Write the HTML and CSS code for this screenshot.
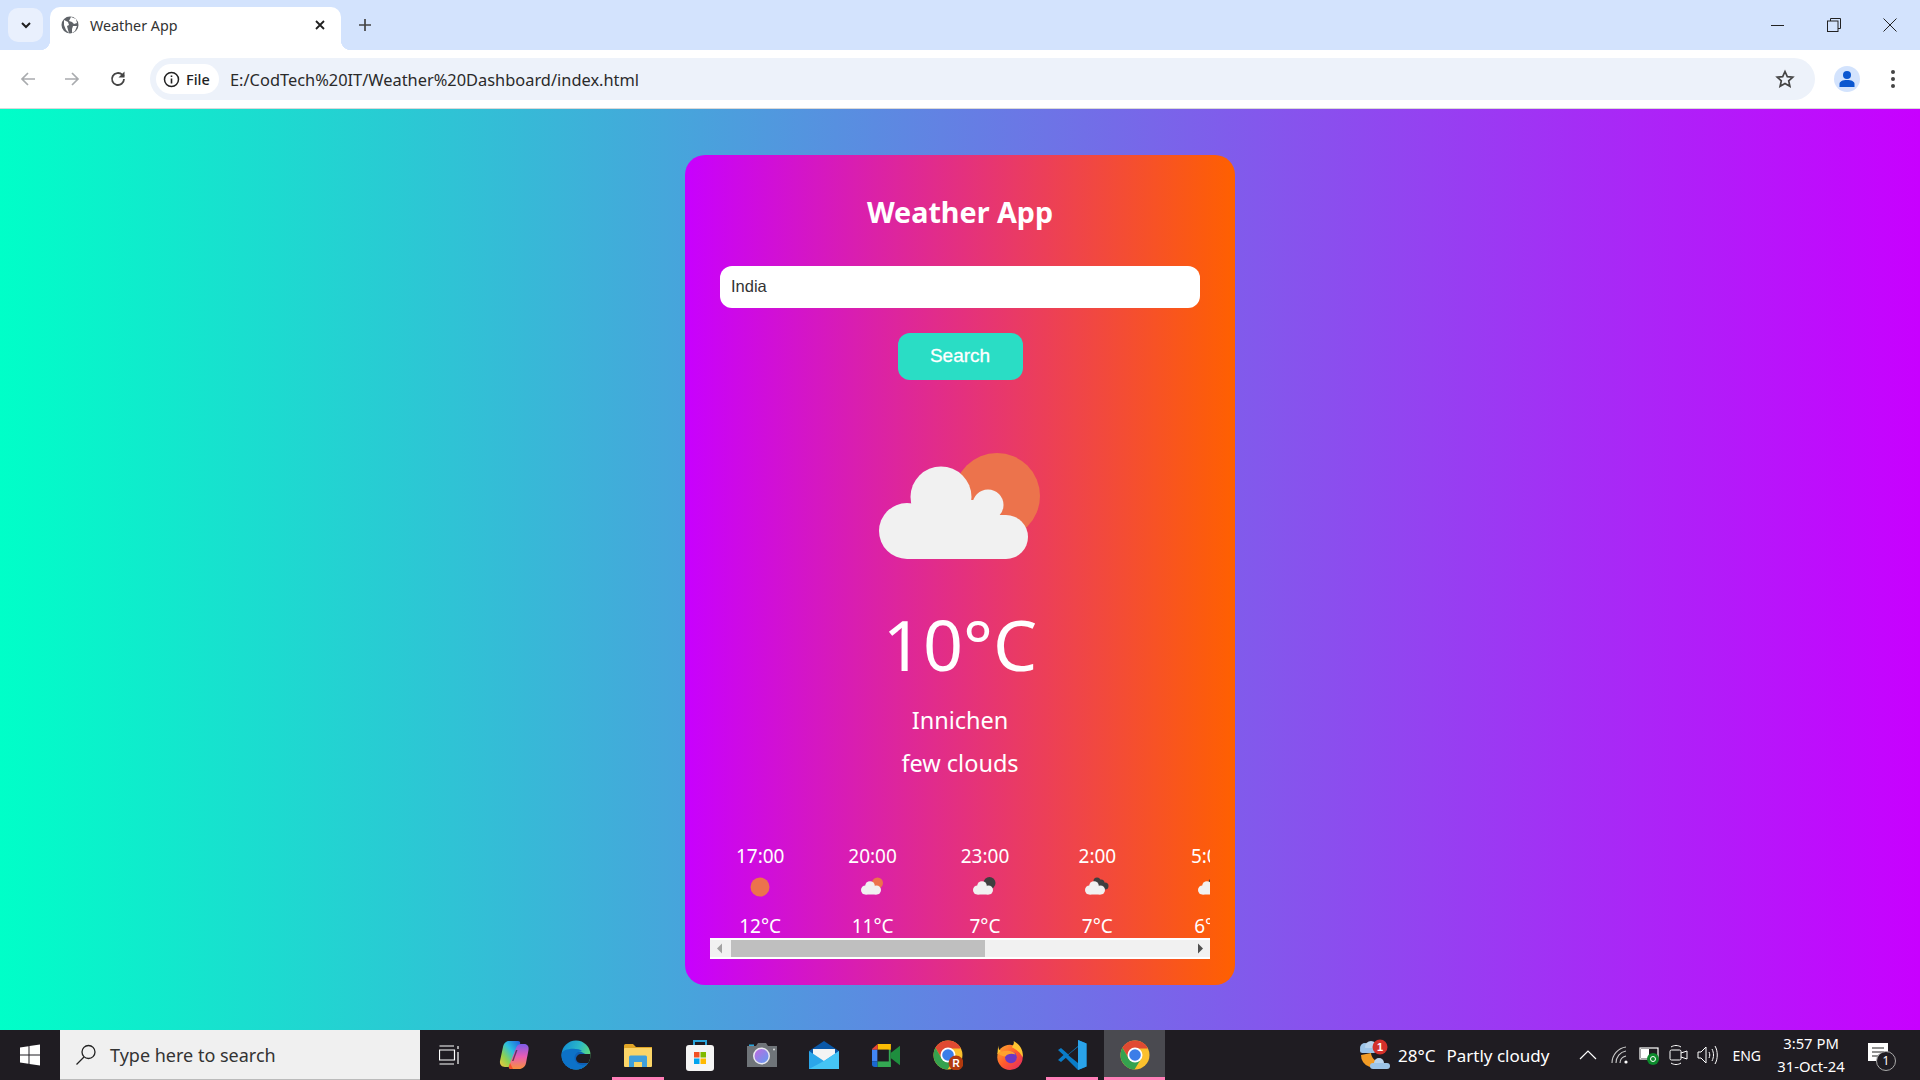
FILE: index.html
```html
<!DOCTYPE html>
<html lang="en">
<head>
    <meta charset="UTF-8">
    <title>Weather App</title>
    <link rel="stylesheet" href="styles.css">
</head>
<body>
    <div class="tabstrip">
        <div class="tab-list">
            <svg width="14" height="14" viewBox="0 0 14 14"><path d="M3 5l4 4 4-4" fill="none" stroke="#1f1f1f" stroke-width="2"/></svg>
        </div>
        <div class="tab">
            <svg class="favicon" width="18" height="18" viewBox="0 0 18 18"><circle cx="9" cy="9" r="8.5" fill="#5f6368"/><path d="M3 4l4 2 1 3-2 1 1 4 1 3-3-3-2-5zM10 1l5 2 1 4-3 1-2-2-3-1zM12 10l4 0-2 5-3 2 0-4z" fill="#fff"/></svg>
            <span class="tab-title">Weather App</span>
            <svg class="tab-close" width="12" height="12" viewBox="0 0 12 12"><path d="M2 2l8 8M10 2l-8 8" stroke="#1f1f1f" stroke-width="1.8"/></svg>
        </div>
        <svg class="new-tab" width="14" height="14" viewBox="0 0 14 14"><path d="M7 1v12M1 7h12" stroke="#444" stroke-width="1.7"/></svg>
        <div class="window-btns">
            <svg width="14" height="14" viewBox="0 0 14 14"><path d="M0 7.5h13" stroke="#222" stroke-width="1"/></svg>
            <svg width="14" height="14" viewBox="0 0 14 14"><path d="M3.5 3V.5h10v10H11" fill="none" stroke="#222"/><rect x=".5" y="3" width="10.5" height="10.5" fill="none" stroke="#222"/></svg>
            <svg width="14" height="14" viewBox="0 0 14 14"><path d="M.5.5l13 13M13.500.5l-13 13" stroke="#222"/></svg>
        </div>
    </div>

    <div class="toolbar">
        <svg class="nav-icon" width="18" height="18" viewBox="0 0 18 18"><path d="M16 9H3M9 3L3 9l6 6" fill="none" stroke="#a9abae" stroke-width="1.700"/></svg>
        <svg class="nav-icon" width="18" height="18" viewBox="0 0 18 18"><path d="M2 9h13M9 3l6 6-6 6" fill="none" stroke="#a9abae" stroke-width="1.700"/></svg>
        <svg class="nav-icon" width="18" height="18" viewBox="0 0 18 18"><path d="M15 9a6 6 0 1 1-1.800-4.300L15 6.500" fill="none" stroke="#444" stroke-width="1.800"/><path d="M15.500 1.500v6h-6z" fill="#444"/></svg>
        <div class="omnibox">
            <div class="file-chip">
                <svg width="17" height="17" viewBox="0 0 17 17"><circle cx="8.500" cy="8.500" r="7" fill="none" stroke="#222" stroke-width="1.500"/><path d="M8.500 7.500v5M8.500 4.500v1.600" stroke="#222" stroke-width="1.600"/></svg>
                <span>File</span>
            </div>
            <span class="url">E:/CodTech%20IT/Weather%20Dashboard/index.html</span>
            <svg class="star" width="20" height="20" viewBox="0 0 20 20"><path d="M10 2.500l2.300 5.100 5.500.6-4.100 3.700 1.200 5.400L10 14.500l-4.900 2.800 1.200-5.400-4.100-3.700 5.500-.6z" fill="none" stroke="#444" stroke-width="1.700"/></svg>
        </div>
        <div class="avatar">
            <svg width="18" height="18" viewBox="0 0 18 18"><circle cx="9" cy="5" r="4" fill="#0b57d0"/><path d="M1.500 17v-3c0-2.500 3-4 7.500-4s7.500 1.500 7.500 4v3z" fill="#0b57d0"/></svg>
        </div>
        <div class="menu-dots"><i></i><i></i><i></i></div>
    </div>

    <div class="page">
        <div class="card">
            <h1 class="title">Weather App</h1>
            <div class="search-input">India</div>
            <div class="search-btn">Search</div>

            <svg class="main-icon" width="162" height="106" viewBox="0 0 162 106">
                <circle cx="118" cy="43" r="43" fill="#ec734c"/>
                <g fill="#f1f1f1">
                    <circle cx="28" cy="78" r="28"/>
                    <circle cx="62" cy="44" r="30.500"/>
                    <circle cx="109" cy="52" r="15.500"/>
                    <circle cx="127" cy="84" r="22"/>
                    <rect x="28" y="62" width="99" height="44"/>
                    <rect x="62" y="47" width="47" height="16"/>
                </g>
            </svg>

            <div class="temp">10°C</div>
            <div class="city">Innichen</div>
            <div class="desc">few clouds</div>

            <div class="forecast">
                <div class="forecast-row">
                    <div class="hour">
                        <span>17:00</span>
                        <svg class="hour-icon" width="28" height="28" viewBox="0 0 28 28"><circle cx="14" cy="14" r="9.500" fill="#ec734c"/></svg>
                        <span>12°C</span>
                    </div>
                    <div class="hour">
                        <span>20:00</span>
                        <svg class="hour-icon" width="28" height="28" viewBox="0 0 28 28"><circle cx="18.500" cy="10" r="5.500" fill="#ec734c"/><use href="#mini-cloud"/></svg>
                        <span>11°C</span>
                    </div>
                    <div class="hour">
                        <span>23:00</span>
                        <svg class="hour-icon" width="28" height="28" viewBox="0 0 28 28"><circle cx="18.500" cy="10" r="6" fill="#3f3f3f"/><use href="#mini-cloud"/></svg>
                        <span>7°C</span>
                    </div>
                    <div class="hour">
                        <span>2:00</span>
                        <svg class="hour-icon" width="28" height="28" viewBox="0 0 28 28"><g fill="#3f3f3f"><circle cx="14" cy="8" r="3.500"/><circle cx="18" cy="10" r="3.500"/><circle cx="22" cy="13" r="3.500"/></g><use href="#mini-cloud"/></svg>
                        <span>7°C</span>
                    </div>
                    <div class="hour">
                        <span>5:00</span>
                        <svg class="hour-icon" width="28" height="28" viewBox="0 0 28 28"><circle cx="18.500" cy="10" r="6" fill="#3f3f3f"/><use href="#mini-cloud"/></svg>
                        <span>6°C</span>
                    </div>
                </div>
                <div class="scrollbar">
                    <svg width="21" height="21" viewBox="0 0 21 21"><path d="M7 10.500l5-5v10z" fill="#a3a3a3"/></svg>
                    <div class="thumb"></div>
                    <svg class="arrow-right" width="21" height="21" viewBox="0 0 21 21"><path d="M14 10.500l-5-5v10z" fill="#505050"/></svg>
                </div>
            </div>
        </div>
    </div>

    <svg width="0" height="0" class="defs">
        <defs>
            <g id="mini-cloud">
                <circle cx="6.500" cy="17" r="4.500" fill="#f1f1f1"/>
                <circle cx="11" cy="13" r="4.800" fill="#f1f1f1"/>
                <circle cx="17.500" cy="17" r="4.500" fill="#f1f1f1"/>
                <rect x="6.500" y="15" width="11" height="6.500" fill="#f1f1f1"/>
            </g>
            <g id="chrome-logo">
                <circle cx="15" cy="15" r="14.500" fill="#fbc02d"/>
                <path d="M27.560 7.750A14.500 14.500 0 0 0 2.440 7.750L8.700 18.600 15 8.500h12.560z" fill="#e04a32"/>
                <path d="M2.440 7.750A14.500 14.500 0 0 0 14.500 29.500L21.300 18.600 15 21.500l-6.300-2.900z" fill="#35a24f"/>
                <circle cx="15" cy="15" r="7.500" fill="#fff"/>
                <circle cx="15" cy="15" r="5.800" fill="#3b7de8"/>
            </g>
            <linearGradient id="cp1" x1="1" y1="0" x2="0" y2="1"><stop offset="0" stop-color="#1f5fe0"/><stop offset=".4" stop-color="#2bc0e0"/><stop offset=".7" stop-color="#8fd14f"/><stop offset="1" stop-color="#f7c53c"/></linearGradient>
            <linearGradient id="cp2" x1="0" y1="0" x2="0" y2="1"><stop offset="0" stop-color="#7c5ce8"/><stop offset=".5" stop-color="#e85cb5"/><stop offset="1" stop-color="#f7913c"/></linearGradient>
            <linearGradient id="ed1" x1="0" y1="0" x2="1" y2=".4"><stop offset="0" stop-color="#0d86d6"/><stop offset=".6" stop-color="#2bb8c8"/><stop offset="1" stop-color="#5fdc7a"/></linearGradient>
            <linearGradient id="fx1" x1="0" y1="0" x2="1" y2="1"><stop offset="0" stop-color="#ffb02e"/><stop offset=".5" stop-color="#ff5a2c"/><stop offset="1" stop-color="#e0256b"/></linearGradient>
            <linearGradient id="cam1" x1="0" y1="0" x2="1" y2="1"><stop offset="0" stop-color="#c06ae0"/><stop offset="1" stop-color="#5f9cf0"/></linearGradient>
            <clipPath id="edge-clip"><circle cx="15" cy="15" r="14.500"/></clipPath>
        </defs>
    </svg>

    <div class="taskbar">
        <div class="start">
            <svg width="22" height="22" viewBox="0 0 22 22"><path d="M1 3.500l8.500-1.300v8.300H1zM10.500 2L21 .5v10H10.500zM1 11.500h8.500v8.300L1 18.500zM10.500 11.500H21v10L10.500 20z" fill="#fff"/></svg>
        </div>
        <div class="task-search">
            <svg width="24" height="24" viewBox="0 0 24 24"><circle cx="14.500" cy="9" r="6.500" fill="none" stroke="#222" stroke-width="1.300"/><path d="M10 14l-7.500 7.500" stroke="#222" stroke-width="1.300"/></svg>
            <span>Type here to search</span>
        </div>
        <div class="task-apps">
            <div class="app app-view"><svg width="20" height="20" viewBox="0 0 20 20"><path d="M.5 1H15M.5 5h15v10H.5zM.5 19H15M19 1v3M19 7v12" fill="none" stroke="#fff" stroke-width="1.200"/></svg></div>
            <div class="app"><svg width="30" height="30" viewBox="0 0 30 30"><path d="M10 1h9c2 0 2.500 1.500 2 3L14 23c-1 2.500-2.500 4-5 4H6c-3.500 0-5.500-2.500-5-6L4 7c.7-3.500 3-6 6-6z" fill="url(#cp1)"/><path d="M20 29h-8c-2 0-2.500-1.500-2-3l7-18c1-2.500 2.500-4 5-4h3c3.500 0 5 2.500 4.500 6L27 23c-.7 3.500-3.500 6-7 6z" fill="url(#cp2)"/><path d="M11 23l3 6h-2c-2 0-2.500-1.500-2-3z" fill="#f4502c"/><path d="M13 21l4-11 1.500 0-4 11z" fill="#1f1c22" opacity=".6"/></svg></div>
            <div class="app"><svg width="30" height="30" viewBox="0 0 30 30"><g clip-path="url(#edge-clip)"><rect width="30" height="30" fill="url(#ed1)"/><ellipse cx="15" cy="21" rx="13" ry="10" fill="#0f5fb5"/><path d="M0 15c0 10 7 15 15 15 6 0 11-2 15-7-6 3-12 3-15-1-4-6 1-11 6-11-4-4-21-3-21 4z" fill="#0d72c8"/><path d="M30 14H20a5 5 0 0 0-5 5 5 5 0 0 0 5 4h10z" fill="#1f1c22"/></g></svg></div>
            <div class="app app-open"><svg width="28" height="23" viewBox="0 0 28 23"><path d="M0 1.500A1.500 1.500 0 0 1 1.500 0H9l3 3h16v4H0z" fill="#e0a526"/><rect y="4" width="28" height="19" rx="1" fill="#fbd568"/><path d="M5 23V13a1.500 1.500 0 0 1 1.500-1.500h15A1.500 1.500 0 0 1 23 13v10h-5v-5h-8v5z" fill="#3f9fdc"/></svg></div>
            <div class="app"><svg width="30" height="32" viewBox="0 0 30 32"><path d="M9 7V2h12v5" fill="none" stroke="#2aa5dc" stroke-width="2"/><rect x="1" y="6" width="28" height="26" rx="3" fill="#f5f5f5"/><rect x="9" y="13" width="5.500" height="5.500" fill="#f25022"/><rect x="15.500" y="13" width="5.500" height="5.500" fill="#7fba00"/><rect x="9" y="19.500" width="5.500" height="5.500" fill="#00a4ef"/><rect x="15.500" y="19.500" width="5.500" height="5.500" fill="#ffb900"/></svg></div>
            <div class="app"><svg width="30" height="24" viewBox="0 0 30 24"><rect x="2" y="1.500" width="5" height="3" fill="#2aa5dc"/><path d="M9 3l2-3h8l2 3h9v21H0V3z" fill="#6f7479"/><circle cx="14.500" cy="13" r="8.500" fill="#e8e8f0"/><circle cx="14.500" cy="13" r="7" fill="url(#cam1)"/><circle cx="27" cy="6.500" r="1" fill="#ddd"/></svg></div>
            <div class="app"><svg width="30" height="28" viewBox="0 0 30 28"><path d="M0 10L15 0l15 10v6H0z" fill="#0a58a8"/><path d="M4 8h22v9L15 23 4 17z" fill="#f4f4f4"/><path d="M0 10l15 10L30 10v18H0z" fill="#2ba6ea"/><path d="M0 28l15-8 15-10v18z" fill="#45c4f5"/></svg></div>
            <div class="app"><svg width="28" height="23" viewBox="0 0 30 28" preserveAspectRatio="none"><path d="M6 0h14v7H6z" fill="#fbbc04"/><path d="M0 6l6-6v7H0z" fill="#ea4335"/><path d="M0 7h6v14H0z" fill="#4285f4"/><path d="M0 21h6v7H3a3 3 0 0 1-3-3z" fill="#1967d2"/><path d="M6 21h14v7H6z" fill="#34a853"/><rect x="6" y="7" width="12" height="14" fill="#1f1b22"/><path d="M18 0h2v7h-2z" fill="#fbbc04"/><path d="M18 7h2v14h-2z" fill="#34a853"/><path d="M18 21h2v7h-2z" fill="#34a853"/><path d="M20 11l10-9v24l-10-9z" fill="#1e8e3e"/></svg></div>
            <div class="app"><svg width="30" height="30" viewBox="0 0 30 30"><use href="#chrome-logo"/><circle cx="23" cy="23" r="7.500" fill="#b33a0e"/><text x="23" y="27" class="r-badge">R</text></svg></div>
            <div class="app"><svg width="28" height="29" viewBox="0 0 30 32"><circle cx="15" cy="18" r="14" fill="url(#fx1)"/><path d="M19 0c7 4 11 10 10 18-3-6-8-9-12-11 1-2 3-4 2-7zM2 5c0 3 1 5 3 6L1 15z" fill="#ffc531"/><circle cx="16" cy="18" r="6.500" fill="#6b39c4"/><path d="M1 14c4-3 9-4 14-3 3 .5 5 2 6 4-4-2-9-1-11 2-3 0-6-2-9-3z" fill="#ffa22e"/></svg></div>
            <div class="app app-open"><svg width="30" height="30" viewBox="0 0 30 30"><path d="M21 0l8.500 3.500v23L21 30 8 17l13-11z" fill="#0a7cc8"/><path d="M21 0l8.500 3.500v23L21 30z" fill="#2aa3ea"/><path d="M21 7L11 15l10 8z" fill="#1f1b22"/><path d="M1 10l3-2 8 7-8 7-3-2 5.500-5z" fill="#0a7cc8"/></svg></div>
            <div class="app app-active"><svg width="30" height="30" viewBox="0 0 30 30"><use href="#chrome-logo"/></svg></div>
        </div>
        <div class="tray">
            <svg class="tray-weather" width="34" height="32" viewBox="0 0 34 32"><path d="M4 16a12 12 0 0 0 22 7 10 10 0 0 1-12-9z" fill="#f29b25"/><circle cx="8" cy="9" r="5" fill="#9cc4e8"/><circle cx="14" cy="8" r="6" fill="#b8d4ee"/><rect x="3" y="9" width="16" height="5" rx="2.500" fill="#9cc4e8"/><circle cx="22" cy="24" r="5" fill="#b8d4ee"/><rect x="13" y="24" width="20" height="6" rx="3" fill="#9cc4e8"/><circle cx="23" cy="8" r="7.500" fill="#d3302b"/><text x="23" y="12" class="w-badge">1</text></svg>
            <span class="tray-temp">28°C</span>
            <span class="tray-desc">Partly cloudy</span>
            <svg class="tray-chevron" width="18" height="10" viewBox="0 0 18 10"><path d="M1 9l8-8 8 8" fill="none" stroke="#fff" stroke-width="1.200"/></svg>
            <svg class="tray-wifi" width="18" height="18" viewBox="0 0 18 18"><path d="M1 17C1 9 7 2 15 1M5 17C5 11 9 6 15 5M9 17c0-3 2-6 6-7" fill="none" stroke="#ccc" stroke-width="1.100"/><circle cx="15" cy="16" r="1.600" fill="#fff"/></svg>
            <svg class="tray-battery" width="22" height="20" viewBox="0 0 22 20"><rect x="1" y="3" width="18" height="11" fill="none" stroke="#fff" stroke-width="1.200"/><rect x="2" y="4" width="8" height="9" fill="#fff"/><circle cx="14" cy="14" r="6" fill="#0c8a2c"/><circle cx="14" cy="14" r="2.500" fill="none" stroke="#fff"/></svg>
            <svg class="tray-cam" width="20" height="22" viewBox="0 0 20 22"><rect x="1" y="6" width="11" height="10" rx="1.500" fill="none" stroke="#fff"/><path d="M12 9l6-2v8l-6-2M2 3c3-2 7-2 10 0M2 19c3 2 7 2 10 0" fill="none" stroke="#fff"/></svg>
            <svg class="tray-speaker" width="22" height="20" viewBox="0 0 22 20"><path d="M1 7h3l5-5v16l-5-5H1zM12 7c1 2 1 4 0 6M15 4c2 4 2 8 0 12M18 1c3 5 3 13 0 18" fill="none" stroke="#fff"/></svg>
            <span class="tray-lang">ENG</span>
            <div class="clock">
                <span>3:57 PM</span>
                <span>31-Oct-24</span>
            </div>
            <div class="notif">
                <svg width="20" height="20" viewBox="0 0 20 20"><path d="M0 0h20v18H0z" fill="#fff"/><path d="M4 5h12M4 9h12M4 13h8" stroke="#222" stroke-width="1.200"/></svg>
                <span class="notif-badge">1</span>
            </div>
        </div>
    </div>
</body>
</html>
```

FILE: styles.css
```css
* {
    box-sizing: border-box;
}

html, body {
    margin: 0;
    height: 100%;
}

body {
    display: flex;
    flex-direction: column;
    height: 1080px;
    overflow: hidden;
    font-family: "Noto Sans", Arial, sans-serif;
    color: #1f1f1f;
}

.defs {
    position: absolute;
}

/* browser top */
.tabstrip {
    display: flex;
    align-items: flex-end;
    height: 50px;
    flex: none;
    background-color: #d3e3fd;
}

.tab-list {
    display: flex;
    align-items: center;
    justify-content: center;
    width: 35px;
    height: 34px;
    margin: 0 7px 8px 8px;
    background-color: #e9f0fd;
    border-radius: 10px;
}

.tab {
    position: relative;
    display: flex;
    align-items: center;
    width: 291px;
    height: 43px;
    padding: 0 15px 7px 11px;
    background-color: #fff;
    border-radius: 10px 10px 0 0;
}

.tab:before,
.tab:after {
    content: '';
    position: absolute;
    bottom: 0;
    width: 10px;
    height: 10px;
}

.tab:before {
    left: -10px;
    background: radial-gradient(circle at 0 0, #d3e3fd 10px, #fff 10.5px);
}

.tab:after {
    right: -10px;
    background: radial-gradient(circle at 100% 0, #d3e3fd 10px, #fff 10.5px);
}

.tab-title {
    flex: 1;
    margin-left: 11px;
    font-size: 14.3px;
    color: #333;
}

.new-tab {
    margin: 0 0 18px 17px;
}

.window-btns {
    display: flex;
    gap: 42px;
    margin: 0 23px 18px auto;
}

.toolbar {
    display: flex;
    align-items: center;
    height: 59px;
    flex: none;
    padding: 0 19px;
    background-color: #fff;
    border-bottom: 1px solid #d9d9d9;
}

.nav-icon {
    margin-right: 26px;
    flex: none;
}

.nav-icon:nth-child(2) {
    margin-right: 28px;
}

.nav-icon:nth-child(3) {
    margin-right: 24px;
}

.omnibox {
    display: flex;
    align-items: center;
    width: 1665px;
    height: 42px;
    flex: none;
    margin-left: -1px;
    padding: 0 20px 0 6px;
    background-color: #edf2fa;
    border-radius: 21px;
}

.file-chip {
    display: flex;
    align-items: center;
    gap: 6px;
    width: 63px;
    height: 30px;
    padding-left: 7px;
    background-color: #fff;
    border-radius: 15px;
    font-size: 14.5px;
    font-weight: 500;
}

.url {
    flex: 1;
    margin-left: 11px;
    font-size: 16.4px;
    color: #2a2a2a;
}

.avatar {
    display: flex;
    align-items: center;
    justify-content: center;
    width: 26px;
    height: 26px;
    margin-left: 19px;
    background-color: #d3e3fd;
    border-radius: 50%;
    overflow: hidden;
    flex: none;
}

.menu-dots {
    display: flex;
    flex-direction: column;
    gap: 3px;
    margin-left: 31px;
}

.menu-dots i {
    width: 4px;
    height: 4px;
    background-color: #444;
    border-radius: 50%;
}

/* page */
.page {
    flex: 1;
    display: flex;
    justify-content: center;
    padding-top: 46px;
    background: linear-gradient(90deg, #00ffc8, #c800ff);
}

.card {
    display: flex;
    flex-direction: column;
    align-items: center;
    width: 550px;
    height: 830px;
    padding-top: 37px;
    background: linear-gradient(90deg, #c800ff, #ff6000);
    border-radius: 20px;
    color: #fff;
}

.title {
    margin: 0;
    font-size: 28.7px;
    line-height: 40px;
    font-weight: 700;
}

.search-input {
    width: 480px;
    height: 42px;
    margin-top: 34px;
    padding: 0 11px;
    background-color: #fff;
    border-radius: 12px;
    color: #333;
    font-family: "Liberation Sans", Arial, sans-serif;
    font-size: 16.5px;
    line-height: 40px;
}

.search-btn {
    width: 125px;
    height: 47px;
    margin-top: 25px;
    background-color: #2addc5;
    border-radius: 12px;
    font-family: "Liberation Sans", Arial, sans-serif;
    font-size: 19px;
    -webkit-text-stroke: 0.3px #fff;
    line-height: 45px;
    text-align: center;
}

.main-icon {
    margin-top: 73px;
}

.temp {
    margin-top: 39px;
    font-size: 70px;
    font-weight: 400;
    line-height: 92px;
}

.city {
    margin-top: 9px;
    font-size: 23.5px;
    line-height: 43px;
}

.desc {
    font-size: 23.5px;
    line-height: 43px;
}

.forecast {
    width: 500px;
    margin-top: 58px;
    overflow: hidden;
}

.forecast-row {
    display: flex;
    overflow: hidden;
}

.hour {
    display: flex;
    flex-direction: column;
    align-items: center;
    flex: none;
    width: 112.400px;
    font-size: 19px;
    line-height: 27px;
}

.hour:first-child {
    margin-left: -6px;
}

.hour-icon {
    margin: 3px 0 12px;
}

.scrollbar {
    display: flex;
    align-items: center;
    height: 21px;
    margin-top: -2px;
    position: relative;
    background-color: #f1f1f1;
    border-top: 2px solid #fff;
    border-bottom: 2px solid #fff;
}

.scrollbar svg {
    flex: none;
    margin: -2px 0;
}

.thumb {
    width: 254px;
    height: 100%;
    background-color: #bfbfbf;
}

.arrow-right {
    margin-left: auto !important;
}

/* windows taskbar */
.taskbar {
    display: flex;
    align-items: stretch;
    height: 50px;
    flex: none;
    background-color: #1f1c22;
    color: #fff;
}

.start {
    display: flex;
    align-items: center;
    justify-content: center;
    width: 60px;
}

.task-search {
    display: flex;
    align-items: center;
    width: 360px;
    padding-left: 14px;
    background-color: #f0f0f0;
    border-bottom: 1px solid #bbb;
    color: #333;
    font-size: 18px;
}

.task-search span {
    margin-left: 12px;
}

.task-apps {
    display: flex;
    margin-left: 1px;
}

.app {
    display: flex;
    align-items: center;
    justify-content: center;
    width: 62px;
    flex: none;
    position: relative;
}

.app-view {
    padding-right: 6px;
}

.app-open:after,
.app-active:after {
    content: '';
    position: absolute;
    left: 5px;
    right: 5px;
    bottom: 0;
    height: 3px;
    background-color: #ff7fb8;
}

.app-active {
    width: 61px;
    margin-left: 1px;
    background-color: #4a4a50;
}

.app-active:after {
    left: 0;
    right: 0;
}

.r-badge {
    font: bold 10px "Liberation Sans", Arial, sans-serif;
    fill: #fff;
    text-anchor: middle;
}

.w-badge {
    font: bold 11px "Liberation Sans", Arial, sans-serif;
    fill: #fff;
    text-anchor: middle;
}

.tray {
    display: flex;
    align-items: center;
    flex: 1;
    font-size: 17px;
    padding-left: 192px;
}

.tray-temp {
    margin-left: 7px;
}

.tray-desc {
    margin-left: 11px;
}

.tray-chevron {
    margin-left: 30px;
}

.tray-wifi {
    margin-left: 14px;
}

.tray-battery {
    margin-left: 10px;
}

.tray-cam {
    margin-left: 8px;
}

.tray-speaker {
    margin-left: 8px;
}

.tray-lang {
    margin-left: 13px;
    font-size: 14px;
}

.clock {
    display: flex;
    flex-direction: column;
    align-items: center;
    width: 80px;
    margin-left: 10px;
    font-size: 14.8px;
    line-height: 23px;
}

.notif {
    position: relative;
    margin-left: 17px;
    height: 24px;
}

.notif-badge {
    position: absolute;
    left: 8px;
    top: 8px;
    width: 20px;
    height: 20px;
    background-color: #1f1c22;
    border: 1px solid #aaa;
    border-radius: 50%;
    font-size: 12px;
    line-height: 18px;
    text-align: center;
}
```
